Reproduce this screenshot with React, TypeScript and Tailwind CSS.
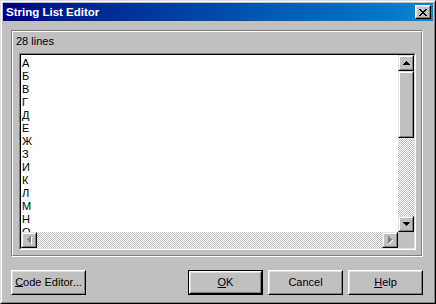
import React from "react";

const LINES = ["А","Б","В","Г","Д","Е","Ж","З","И","К","Л","М","Н","О"];

function ScrollBtn({ children }: { children: React.ReactNode }) {
  return (
    <div className="w-[16px] h-[16px] shrink-0 border border-t-[#dfdfdf] border-l-[#dfdfdf] border-r-black border-b-black">
      <div className="w-full h-full border border-t-white border-l-white border-r-[#808080] border-b-[#808080] bg-[#c0c0c0] flex items-center justify-center">
        {children}
      </div>
    </div>
  );
}

function UpArrow() {
  return (
    <svg width="7" height="4" viewBox="0 0 7 4" shapeRendering="crispEdges" className="block -mt-px">
      <rect x="3" y="0" width="1" height="1" fill="#000" />
      <rect x="2" y="1" width="3" height="1" fill="#000" />
      <rect x="1" y="2" width="5" height="1" fill="#000" />
      <rect x="0" y="3" width="7" height="1" fill="#000" />
    </svg>
  );
}

function DownArrow() {
  return (
    <svg width="7" height="4" viewBox="0 0 7 4" shapeRendering="crispEdges" className="block">
      <rect x="0" y="0" width="7" height="1" fill="#000" />
      <rect x="1" y="1" width="5" height="1" fill="#000" />
      <rect x="2" y="2" width="3" height="1" fill="#000" />
      <rect x="3" y="3" width="1" height="1" fill="#000" />
    </svg>
  );
}

function LeftArrowDisabled() {
  return (
    <svg width="5" height="8" viewBox="0 0 5 8" shapeRendering="crispEdges" className="block">
      <g fill="#fff">
        <rect x="4" y="1" width="1" height="7" />
      </g>
      <g fill="#808080">
        <rect x="0" y="3" width="1" height="1" />
        <rect x="1" y="2" width="1" height="3" />
        <rect x="2" y="1" width="1" height="5" />
        <rect x="3" y="0" width="1" height="7" />
      </g>
    </svg>
  );
}

function RightArrowDisabled() {
  return (
    <svg width="5" height="8" viewBox="0 0 5 8" shapeRendering="crispEdges" className="block">
      <g fill="#fff">
        <rect x="1" y="7" width="1" height="1" />
        <rect x="2" y="6" width="1" height="1" />
        <rect x="3" y="5" width="1" height="1" />
        <rect x="4" y="4" width="1" height="1" />
      </g>
      <g fill="#808080">
        <rect x="0" y="0" width="1" height="7" />
        <rect x="1" y="1" width="1" height="5" />
        <rect x="2" y="2" width="1" height="3" />
        <rect x="3" y="3" width="1" height="1" />
      </g>
    </svg>
  );
}

function CloseX() {
  const rows = [
    [0, 1, 6, 7],
    [1, 2, 5, 6],
    [2, 3, 4, 5],
    [3, 4],
    [2, 3, 4, 5],
    [1, 2, 5, 6],
    [0, 1, 6, 7],
  ];
  return (
    <svg width="8" height="7" viewBox="0 0 8 7" shapeRendering="crispEdges" className="block">
      {rows.map((r, y) => r.map((x) => <rect key={`${x}-${y}`} x={x} y={y} width="1" height="1" fill="#000" />))}
    </svg>
  );
}

function Button({ children, def }: { children: React.ReactNode; def?: boolean }) {
  const inner = (
    <div className="w-full h-full border border-t-white border-l-white border-r-black border-b-black">
      <div className="w-full h-full border border-t-[#dfdfdf] border-l-[#dfdfdf] border-r-[#808080] border-b-[#808080] bg-[#c0c0c0] flex items-center justify-center leading-[13px]">
        {children}
      </div>
    </div>
  );
  if (def) {
    return <div className="w-[75px] h-[25px] border border-black">{inner}</div>;
  }
  return <div className="w-[75px] h-[25px]">{inner}</div>;
}

const checker =
  "bg-[image:repeating-conic-gradient(#c0c0c0_0_25%,#ffffff_0_50%)] bg-[length:2px_2px]";

export default function App() {
  return (
    <div className="w-[436px] h-[304px] bg-[#c0c0c0] border border-t-[#dfdfdf] border-l-[#dfdfdf] border-r-black border-b-black font-['Liberation_Sans',Arial,sans-serif] text-[11px] text-black">
      <div className="h-full border border-t-white border-l-white border-r-[#808080] border-b-[#808080] p-px flex flex-col">
        {/* Title bar */}
        <div className="h-[18px] shrink-0 flex items-center bg-linear-to-r from-[#000080] to-[#1084d0] pl-[3px] pr-[2px]">
          <span className="flex-1 text-white font-bold text-[11.5px] leading-[18px]">String List Editor</span>
          <div className="w-[16px] h-[14px] border border-t-white border-l-white border-r-black border-b-black">
            <div className="w-full h-full border border-t-[#dfdfdf] border-l-[#dfdfdf] border-r-[#808080] border-b-[#808080] bg-[#c0c0c0] flex items-center justify-center">
              <CloseX />
            </div>
          </div>
        </div>

        {/* Content */}
        <div className="flex-1 flex flex-col pl-[8px] pr-[10px] pt-[9px]">
          {/* Group box */}
          <div className="h-[227px] shrink-0 border border-t-[#808080] border-l-[#808080] border-b-white border-r-white">
            <div className="h-full border border-t-white border-l-white border-b-[#808080] border-r-[#808080] flex flex-col pt-[3px] pl-[3px] pr-[5px] pb-[5px]">
              <div className="leading-[13px] h-[13px]">28 lines</div>
              <div className="ml-[3px] mt-[5px] flex-1 min-h-0 border border-t-[#808080] border-l-[#808080] border-b-white border-r-white">
                <div className="h-full border border-t-black border-l-black border-b-[#dfdfdf] border-r-[#dfdfdf] bg-white grid grid-cols-[1fr_16px] grid-rows-[1fr_16px]">
                  <div className="overflow-hidden pl-[1px] pt-[2px] leading-[13px]">
                    {LINES.map((l) => (
                      <div key={l} className="h-[13px]">{l}</div>
                    ))}
                  </div>
                  <div className="flex flex-col">
                    <ScrollBtn><UpArrow /></ScrollBtn>
                    <div className="w-[16px] h-[67px] shrink-0 border border-t-[#dfdfdf] border-l-[#dfdfdf] border-r-black border-b-black">
                      <div className="w-full h-full border border-t-white border-l-white border-r-[#808080] border-b-[#808080] bg-[#c0c0c0]" />
                    </div>
                    <div className={`flex-1 ${checker}`} />
                    <ScrollBtn><DownArrow /></ScrollBtn>
                  </div>
                  <div className="flex">
                    <ScrollBtn><LeftArrowDisabled /></ScrollBtn>
                    <div className={`flex-1 ${checker}`} />
                    <ScrollBtn><RightArrowDisabled /></ScrollBtn>
                  </div>
                  <div className="bg-[#c0c0c0]" />
                </div>
              </div>
            </div>
          </div>

          {/* Buttons */}
          <div className="mt-[13px] flex">
            <Button><span className="underline-offset-0"><u>C</u>ode Editor...</span></Button>
            <div className="ml-auto flex gap-[5px]">
              <Button def><span><u>O</u>K</span></Button>
              <Button>Cancel</Button>
              <Button><span><u>H</u>elp</span></Button>
            </div>
          </div>
        </div>
      </div>
    </div>
  );
}
